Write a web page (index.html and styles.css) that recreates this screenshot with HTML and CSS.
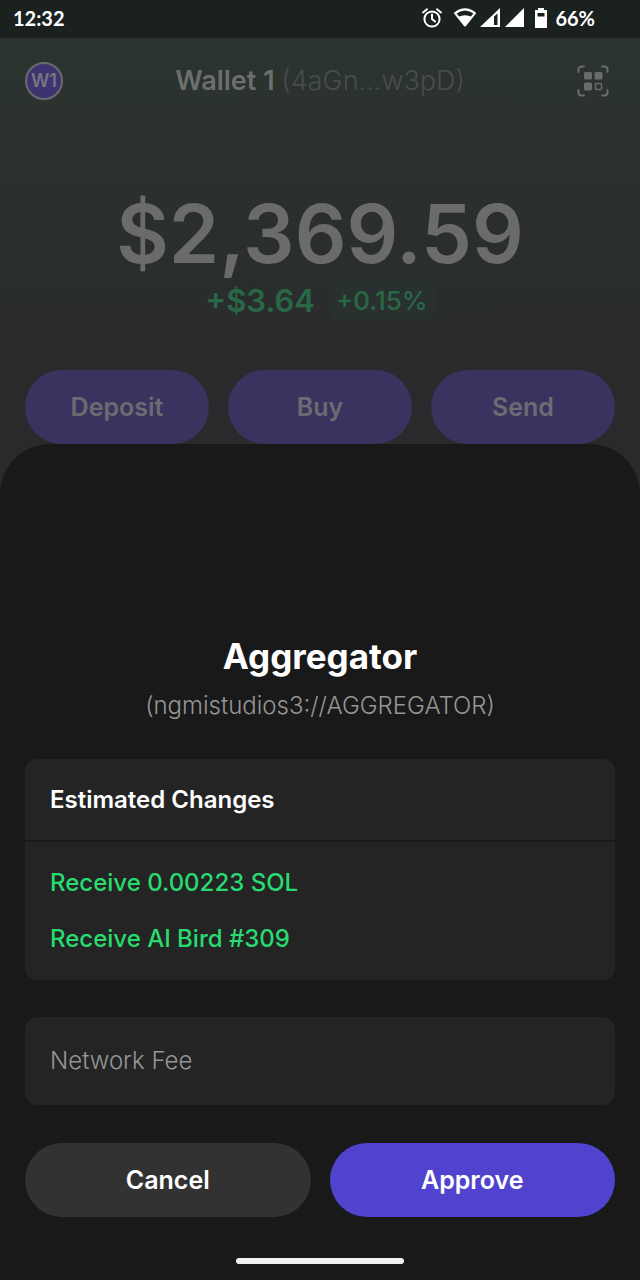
FILE: index.html
```html
<!DOCTYPE html>
<html lang="en">
<head>
<meta charset="utf-8">
<meta name="viewport" content="width=device-width, initial-scale=1">
<title>Approve transaction</title>
<link rel="stylesheet" href="styles.css">
</head>
<body>
<div class="screen">
  <div class="status">
    <span>12:32</span>
    <div class="status-right">
      <svg class="status-icons" width="130" height="22" viewBox="0 0 130 22" aria-hidden="true">
        <g fill="none" stroke="#fff" stroke-width="2" stroke-linecap="round">
          <circle cx="12" cy="12" r="7.6"/>
          <path d="M12 7.5V12l3 2.5"/>
          <path d="M3 5.5l4-3.2M21 5.5l-4-3.2"/>
          <path d="M35 6.200Q45 -1.500 55 6.200L45 18.500Z" stroke-linejoin="round"/>
        </g>
        <path fill="#fff" d="M38 10Q45 6.500 52 10L45 19Z"/>
        <path fill="#fff" fill-rule="evenodd" d="M60 20L80 1V20ZM74 9.500V18h3.500V6.500Z"/>
        <path fill="#fff" d="M85 20L104 1V20Z"/>
        <path fill="#fff" fill-rule="evenodd" d="M118 1h6v2h3v18h-12V3h3ZM117.500 6v3.500h7V6Z"/>
      </svg>
      <span>66%</span>
    </div>
  </div>
  <main class="wallet">
    <header class="topbar">
      <button class="avatar">W1</button>
      <h1 class="wallet-name">Wallet 1 <span>(4aGn...w3pD)</span></h1>
      <button class="scan" aria-label="Scan code">
        <svg width="32" height="32" viewBox="0 0 32 32" aria-hidden="true">
          <path d="M1.500 7V4.500a3 3 0 0 1 3-3H7M25 1.500h2.500a3 3 0 0 1 3 3V7M30.500 25v2.500a3 3 0 0 1-3 3H25M7 30.500H4.500a3 3 0 0 1-3-3V25" fill="none" stroke="#6a6c6c" stroke-width="2" stroke-linecap="round"/>
          <g fill="#6a6c6c"><rect x="7" y="7" width="8" height="7.500" rx="1.500"/><rect x="17.500" y="7" width="8" height="7.500" rx="1.500"/><rect x="7" y="17.500" width="8" height="8" rx="1.500"/></g>
          <rect x="18.500" y="18.500" width="6" height="6" rx="1" fill="none" stroke="#6a6c6c" stroke-width="1.500"/>
        </svg>
      </button>
    </header>
    <div class="balance">$2,369.59</div>
    <div class="change"><span>+$3.64</span><span class="percent">+0.15%</span></div>
    <div class="actions">
      <button class="pill">Deposit</button>
      <button class="pill">Buy</button>
      <button class="pill">Send</button>
    </div>
  </main>
  <section class="sheet" role="dialog" aria-labelledby="app-name">
    <h2 class="app-name" id="app-name">Aggregator</h2>
    <p class="app-url">(ngmistudios3://AGGREGATOR)</p>
    <div class="card changes">
      <h3 class="card-title">Estimated Changes</h3>
      <ul class="change-list">
        <li>Receive 0.00223 SOL</li>
        <li>Receive AI Bird #309</li>
      </ul>
    </div>
    <div class="card fee">Network Fee</div>
    <div class="confirm">
      <button class="pill cancel">Cancel</button>
      <button class="pill approve">Approve</button>
    </div>
    <div class="home-bar"></div>
  </section>
</div>
</body>
</html>
```
FILE: styles.css
```css
* { box-sizing: border-box; }

body {
  margin: 0;
  background: #191919;
  color: #fff;
  font-family: Inter, "Liberation Sans", sans-serif;
  font-size: 24px;
  line-height: 32px;
}

h1, h2, h3, p, ul { margin: 0; padding: 0; }
ul { list-style: none; }

button {
  padding: 0;
  border: 0;
  background: none;
  color: inherit;
  font: inherit;
}

svg { display: block; }

.screen {
  display: flex;
  flex-direction: column;
  min-height: 100vh;
  background: linear-gradient(#2c3531 0, #2b322f 120px, #2a2e2e 260px, #2a2a2c 360px, #2a2a2c 100%);
}

.status {
  display: flex;
  align-items: center;
  justify-content: space-between;
  height: 38px;
  padding: 0 45px 2px 13px;
  background: #1b211f;
  font-family: Lato, sans-serif;
  font-size: 20px;
  font-weight: 700;
}

.status-right {
  display: flex;
  align-items: center;
  gap: 5px;
}

.topbar {
  display: grid;
  grid-template-columns: 38px 1fr 38px;
  align-items: center;
  padding: 24px 25px 0;
}

.avatar {
  height: 38px;
  border: 2px solid #6a6a70;
  border-radius: 50%;
  background: #3c3370;
  color: #77757f;
  font-size: 18px;
  font-weight: 600;
}

.wallet-name {
  color: #6b6f6d;
  font-size: 27px;
  font-weight: 600;
  text-align: center;
}

.wallet-name span {
  color: #484d4b;
  font-weight: 300;
}

.scan { justify-self: start; }

.balance {
  margin-top: 86px;
  color: #6b6a6d;
  font-size: 81px;
  font-weight: 600;
  line-height: 96px;
  text-align: center;
}

.change {
  display: flex;
  align-items: center;
  justify-content: center;
  gap: 14px;
  color: #286845;
  font-size: 31px;
  font-weight: 600;
}

.percent {
  padding: 3px 7px;
  border-radius: 10px;
  background: #293130;
  font-size: 26px;
  font-weight: 500;
}

.actions, .confirm {
  display: flex;
  gap: 19px;
}

.actions { padding: 50px 25px 0; }

.pill {
  flex: 1;
  height: 74px;
  border-radius: 37px;
  background: #3a335f;
  color: #6d6b72;
  font-size: 25px;
  font-weight: 600;
}

.sheet {
  flex: 1;
  padding: 192px 25px 15px;
  border-radius: 50px 50px 0 0;
  background: #191919;
}

.app-name {
  font-size: 35px;
  font-weight: 700;
  line-height: 40px;
  text-align: center;
}

.app-url {
  margin-top: 14px;
  color: #969696;
  font-weight: 300;
  text-align: center;
}

.card {
  border-radius: 12px;
  background: #242424;
}

.changes { margin-top: 37px; }

.card-title {
  padding: 25px 25px 24px;
  border-bottom: 2px solid #191919;
  font-size: 24px;
  font-weight: 600;
}

.change-list {
  display: grid;
  gap: 24px;
  padding: 25px;
  color: #28db70;
  font-weight: 500;
}

.fee {
  margin-top: 37px;
  padding: 28px 25px;
  color: #969696;
  font-weight: 300;
}

.confirm { margin-top: 38px; }
.cancel { background: #323232; color: #fff; }
.approve { background: #5043ce; color: #fff; }

.home-bar {
  width: 168px;
  height: 6px;
  margin: 41px auto 0;
  border-radius: 3px;
  background: #f1f1f1;
}
```
